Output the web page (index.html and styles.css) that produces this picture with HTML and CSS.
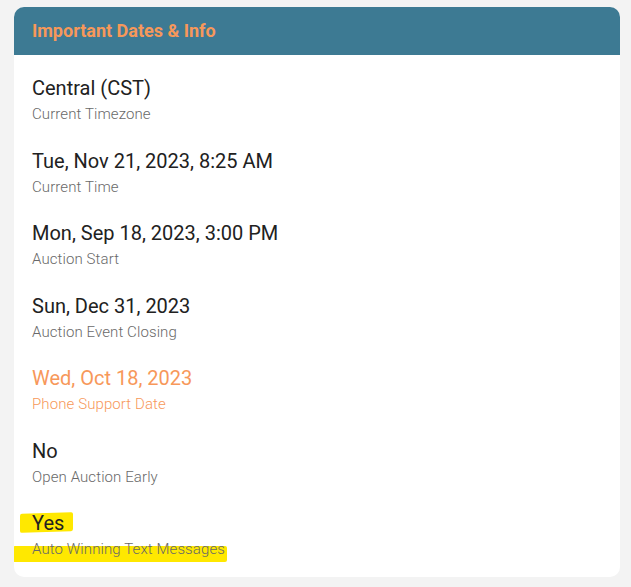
FILE: index.html
```html
<!DOCTYPE html>
<html>
<head>
<meta charset="utf-8">
<link rel="stylesheet" href="styles.css">
</head>
<body>
<div class="card">
  <div class="card-header">Important Dates &amp; Info</div>
  <div class="card-body">
    <div class="item"><div class="value">Central (CST)</div><div class="label">Current Timezone</div></div>
    <div class="item"><div class="value">Tue, Nov 21, 2023, 8:25 AM</div><div class="label">Current Time</div></div>
    <div class="item"><div class="value">Mon, Sep 18, 2023, 3:00 PM</div><div class="label">Auction Start</div></div>
    <div class="item"><div class="value">Sun, Dec 31, 2023</div><div class="label">Auction Event Closing</div></div>
    <div class="item item-accent"><div class="value">Wed, Oct 18, 2023</div><div class="label">Phone Support Date</div></div>
    <div class="item"><div class="value">No</div><div class="label">Open Auction Early</div></div>
    <div class="item item-marked">
      <span class="mark mark-value"></span>
      <span class="mark mark-label"></span>
      <div class="value">Yes</div><div class="label">Auto Winning Text Messages</div>
    </div>
  </div>
</div>
</body>
</html>
```
FILE: styles.css
```css
html, body {
  margin: 0;
  padding: 0;
  background: #f3f3f3;
  font-family: Roboto, "Liberation Sans", sans-serif;
}
.card {
  margin: 7px 11px 0 14px;
  background: #ffffff;
  border-radius: 10px;
  overflow: hidden;
  height: 570px;
  box-sizing: border-box;
}
.card-header {
  height: 48px;
  background: #3d7a93;
  color: #f7985a;
  font-weight: 700;
  font-size: 18px;
  line-height: 48px;
  padding-left: 18px;
}
.card-body {
  padding: 19px 18px 17px 18px;
  display: flex;
  flex-direction: column;
  gap: 20.5px;
}
.item {
  position: relative;
}
.value {
  position: relative;
  font-size: 20px;
  line-height: 28px;
  color: #212121;
}
.label {
  position: relative;
  font-size: 15px;
  line-height: 24px;
  color: #696969;
  font-weight: 300;
  letter-spacing: 0.1px;
}
.item-accent .value,
.item-accent .label {
  color: #f7985a;
}
.mark {
  position: absolute;
  background: #ffe800;
  border-radius: 2px;
}
.mark-value {
  left: -12px;
  top: 4px;
  width: 53px;
  height: 19px;
  transform: skewY(-2deg);
}
.mark-label {
  left: -19px;
  top: 37px;
  width: 214px;
  height: 16px;
}
```
